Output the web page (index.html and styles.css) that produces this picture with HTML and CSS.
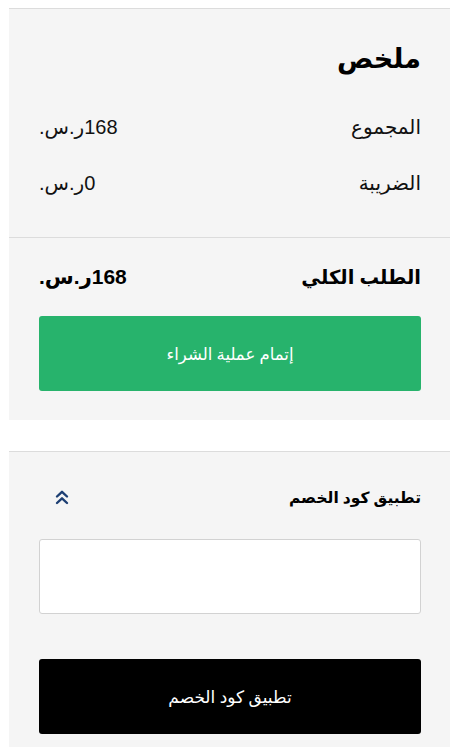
FILE: index.html
```html
<!DOCTYPE html>
<html lang="ar" dir="rtl">
<head>
<meta charset="utf-8">
<title>ملخص</title>
<link rel="stylesheet" href="styles.css">
</head>
<body>
<div class="page">
  <section class="card summary">
    <div class="summary-top">
      <h2 class="title">ملخص</h2>
      <div class="row first">
        <span class="label">المجموع</span>
        <span class="value">168ر.س.</span>
      </div>
      <div class="row">
        <span class="label">الضريبة</span>
        <span class="value">0ر.س.</span>
      </div>
    </div>
    <div class="summary-bottom">
      <div class="total">
        <span class="total-label">الطلب الكلي</span>
        <span class="total-value">168ر.س.</span>
      </div>
      <button class="btn btn-green" type="button">إتمام عملية الشراء</button>
    </div>
  </section>

  <section class="card coupon">
    <div class="coupon-head">
      <span class="coupon-title">تطبيق كود الخصم</span>
      <span class="chev" aria-hidden="true">
        <svg width="14" height="15" viewBox="0 0 14 15">
          <polyline points="2,6.5 7,1.8 12,6.5" fill="none" stroke="currentColor" stroke-width="2.4" stroke-linecap="round" stroke-linejoin="round"/>
          <polyline points="2,13 7,8.3 12,13" fill="none" stroke="currentColor" stroke-width="2.4" stroke-linecap="round" stroke-linejoin="round"/>
        </svg>
      </span>
    </div>
    <input class="code-input" type="text" aria-label="كود الخصم">
    <button class="btn btn-black" type="button">تطبيق كود الخصم</button>
  </section>
</div>
</body>
</html>
```

FILE: styles.css
```css
html, body {
  margin: 0;
  padding: 0;
  background: #ffffff;
}

body {
  font-family: "Noto Sans", "DejaVu Sans", sans-serif;
  color: #111111;
}

.page {
  padding: 8px 5px 0 9px;
  display: flex;
  flex-direction: column;
}

.card {
  background: #f5f5f5;
  border-top: 1px solid #dcdcdc;
  padding: 0 29px 0 30px;
}

.summary-top {
  padding: 34px 29px 42px 30px;
  border-bottom: 1px solid #dcdcdc;
  margin: 0 -29px 0 -30px;
}

.title {
  margin: 0;
  font-size: 27px;
  line-height: 30px;
  font-weight: 700;
  color: #000;
}

.row {
  display: flex;
  justify-content: space-between;
  align-items: center;
  font-size: 20px;
  line-height: 24px;
  margin-top: 32px;
}

.row.first {
  margin-top: 42px;
}

.value,
.total-value {
  font-family: "Liberation Sans", "DejaVu Sans", sans-serif;
}

.summary-bottom {
  padding: 26px 0 29px;
}

.total {
  display: flex;
  justify-content: space-between;
  align-items: center;
  font-size: 21px;
  line-height: 26px;
  font-weight: 700;
  color: #000;
}

.total-label {
  font-size: 19.5px;
}

.btn {
  display: block;
  width: 100%;
  height: 75px;
  border: 0;
  border-radius: 3px;
  color: #ffffff;
  font-family: "Noto Sans", "DejaVu Sans", sans-serif;
  font-size: 16.5px;
  padding: 0;
}

.btn-green {
  background: #27b36c;
  margin-top: 26px;
}

.coupon {
  margin-top: 31px;
  padding-top: 33px;
  padding-bottom: 40px;
}

.coupon-head {
  display: flex;
  justify-content: space-between;
  align-items: center;
  height: 24px;
}

.coupon-title {
  font-size: 15.5px;
  font-weight: 600;
  color: #000;
}

.chev {
  display: flex;
  color: #1d3f73;
  margin-left: 16px;
}

.code-input {
  display: block;
  box-sizing: border-box;
  width: 100%;
  height: 75px;
  margin-top: 30px;
  background: #ffffff;
  border: 1px solid #d2d2d2;
  border-radius: 3px;
}

.btn-black {
  background: #000000;
  margin-top: 45px;
  font-size: 17px;
}
```
